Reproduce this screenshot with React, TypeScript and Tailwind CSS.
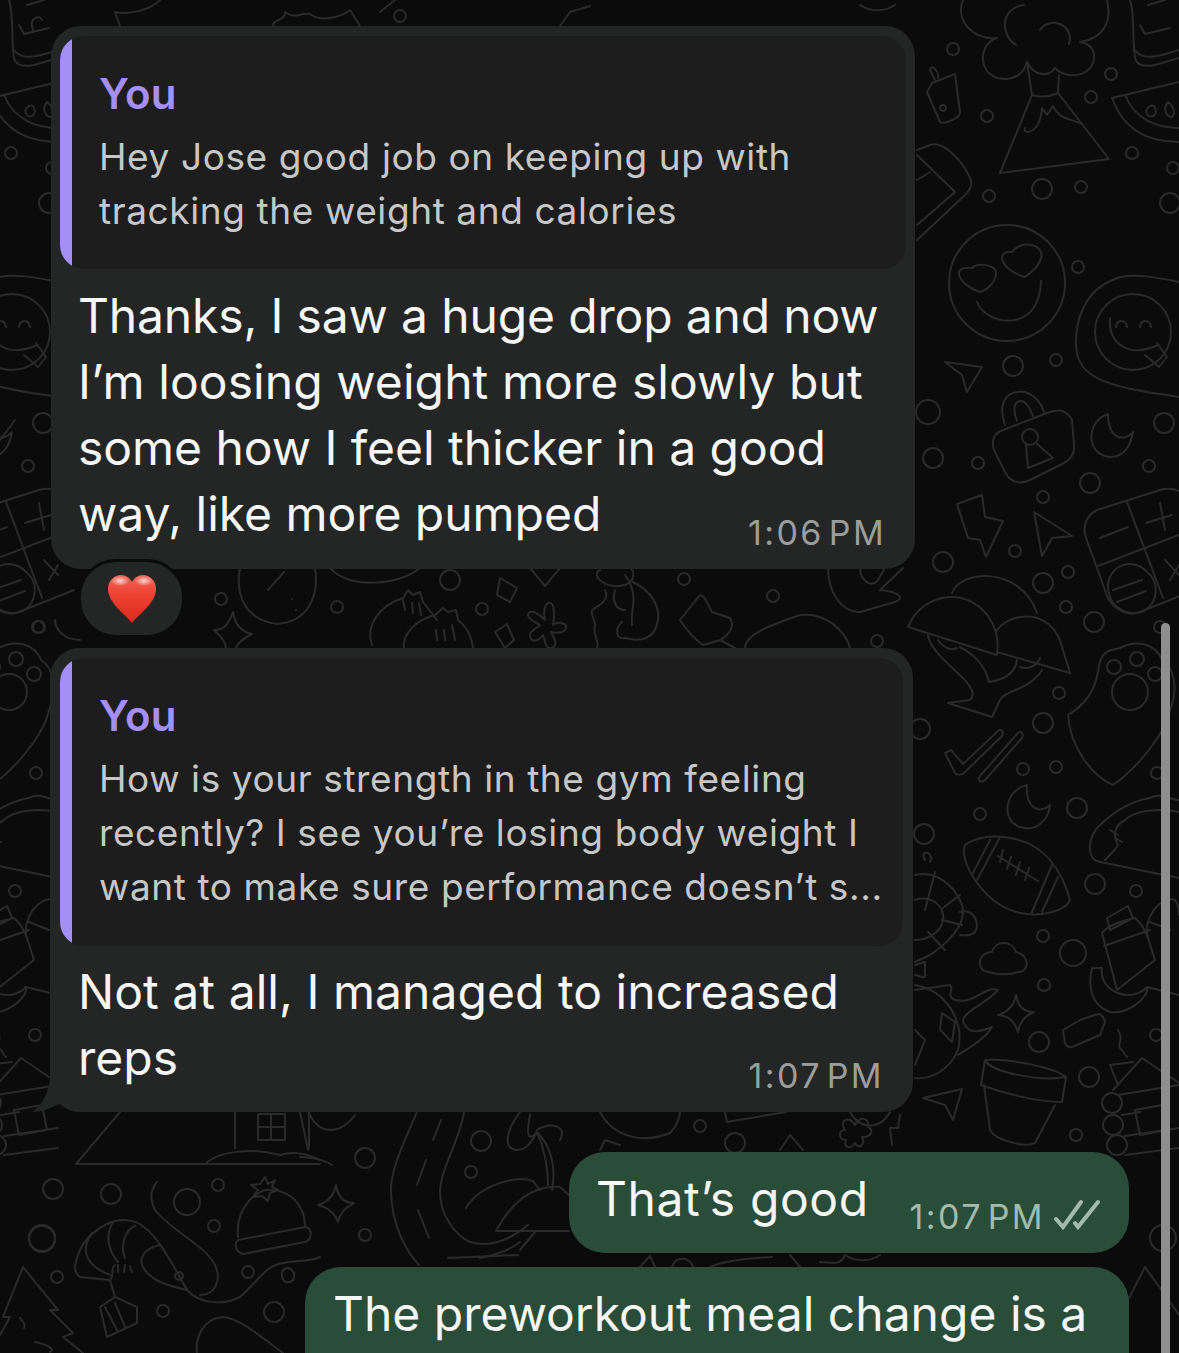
const circles: [number, number, number][] = [
  [953,49,6],[987,116,6],[1111,74,6],[1091,97,6],[1132,153,6],[1173,168,6],[989,196,6],[1042,189,10],[1081,187,6],[1170,203,10],[1078,267,6],[1013,366,10],[1056,360,6],
  [928,412,12],[933,458,10],[978,463,6],[1090,483,10],[1043,497,6],[1015,551,6],[943,562,10],[1043,583,10],[1068,572,6],[1066,607,6],[1094,622,10],[1059,693,6],[1043,723,10],[1023,769,6],[1056,767,6],[1164,423,10],[1149,466,6],[1157,773,6],[1160,627,6],[920,729,10],
  [980,814,6],[1077,808,10],[924,834,10],[1043,936,6],[1073,953,13],[1044,985,6],[1039,1042,10],[1089,1077,10],[1076,1135,6],[1095,884,10],[1136,891,6],[1156,1035,6],[1112,1103,10],[1113,1125,10],[1117,1145,10],
  [1163,1238,13],[1130,692,18],[1114,667,7],[1137,659,7],[1155,674,7],
];
const paths: string[] = [
  // volcano
  "M1000 173L1032 95Q1045 99 1058 93L1109 159Z",
  "M1032 95L1027 62M1058 93L1059 75",
  "M1027 62C1022 85 985 85 983 60C982 48 990 40 997 38C972 40 955 20 963 0M1027 62C1035 78 1050 76 1055 68C1065 80 1095 78 1094 55C1093 46 1086 43 1080 42C1105 38 1112 20 1107 0",
  "M1016 45C1000 35 1000 8 1024 5M1040 30C1050 15 1075 25 1069 44",
  "M1025 128C1022 135 1040 135 1042 108L1047 115L1053 106C1060 120 1070 118 1082 124",
  // small bottle
  "M932 83L955 74L960 112C960 118 945 125 940 122L927 92Z M935 80L930 70C932 62 940 74 938 78M943 105a3 3 0 1 0 .1 0",
  // watermelon
  "M1112 98L1179 82M1112 98C1125 135 1155 142 1179 142M1125 95C1135 120 1158 128 1179 128",
  "M1150 106c6 -3 8 8 3 10c-6 2 -10 -6 -3 -10M1168 102c5 3 8 12 4 15c-5 0 -10 -8 -4 -15",
  // cake
  "M1130 0C1135 15 1132 40 1135 58C1137 66 1145 67 1155 65L1179 58M1135 50C1142 60 1155 58 1179 50M1140 25L1145 34L1170 28M1148 5L1165 0",
  // phone box
  "M917 150L930 145C945 140 965 165 971 180C973 187 968 192 965 195L917 240M917 155L955 192L917 225M917 180L930 172",
  // heart smiley
  "M1065 283a58 58 0 1 1 -116 0a58 58 0 1 1 116 0",
  "M977 302C985 325 1040 335 1041 281",
  "M980 292C958 285 950 265 972 268C978 262 995 265 996 272C997 280 988 290 980 292Z",
  "M1025 277C1000 270 995 250 1012 252C1020 240 1045 243 1041 258C1040 265 1032 272 1025 277Z",
  // tongue smiley
  "M1171 332a38 38 0 1 1 -76 0a38 38 0 1 1 76 0",
  "M1110 318C1108 345 1130 358 1158 345M1116 327c1 -8 10 -8 11 0M1140 327c1 -8 10 -8 11 0M1145 355l14 12l8 -10l-10 -14",
  "M1179 282C1160 278 1130 272 1115 279C1085 290 1075 320 1076 345C1077 380 1110 387 1179 397",
  // plane
  "M945 362L982 367L967 392L962 375Z",
  // padlock
  "M1005 425C998 405 1005 393 1018 392C1030 390 1040 400 1044 412M1017 421C1012 408 1015 402 1020 401C1026 400 1030 408 1033 416",
  "M1003 430L1050 412C1060 408 1068 412 1072 420L1074 445C1075 455 1070 460 1060 465L1030 480C1020 485 1010 482 1005 472L994 450C991 440 994 433 1003 430Z",
  "M1038 437a8 8 0 1 0 -16 0a8 8 0 1 0 16 0M1026 445L1028 468L1053 458L1036 443",
  // moon
  "M1108 414C1088 420 1085 450 1105 456C1120 460 1130 450 1133 432C1125 442 1108 440 1108 414Z",
  // bolt
  "M957 504L982 495L985 517L1003 521L986 557L980 540L968 538Z",
  // arrow
  "M1034 512L1072 536L1052 538L1042 556Z",
  // calculator
  "M1085 535C1083 525 1087 515 1097 510L1160 490C1170 487 1179 490 1185 495M1085 535L1105 590C1108 605 1125 618 1140 612L1195 590",
  "M1127 502L1163 598M1098 566L1179 535M1100 538L1128 527M1146 523L1172 515M1160 503L1165 530M1165 560L1179 575M1179 565L1170 580",
  "M1108 585a22 22 0 0 1 38 -14a24 24 0 0 1 -2 40a26 26 0 0 1 -36 -26M1113 590L1142 580M1117 602L1146 591",
  // mushroom hats
  "M908 627L997 655C1002 620 975 595 950 597C930 598 915 610 908 627Z",
  "M996 632C1005 615 1045 605 1060 640L1070 673L997 652",
  "M952 593C960 570 1020 565 1037 613",
  "M928 635C930 650 950 665 965 680C973 690 975 695 970 700L948 703L992 717L1000 700C1005 690 1030 690 1042 670",
  "M938 640C945 650 953 650 957 648M960 647C975 655 985 665 989 682C1002 680 1015 675 1017 660M1020 667C1030 670 1037 665 1040 658",
  // paw shield
  "M1068 715C1085 705 1095 690 1098 672C1100 650 1110 650 1120 648C1135 640 1155 642 1162 660C1175 668 1178 690 1170 710C1165 735 1135 770 1113 785C1090 775 1070 745 1068 715Z",
  // double check
  "M945 753L951 750L963 764L998 731C1002 727 1004 733 1002 736L965 772C962 775 958 776 955 773ZM980 776L1018 733C1022 730 1024 735 1022 738L985 780C982 783 976 781 980 776Z",
  // moon 2
  "M1027 785C1005 790 1000 820 1020 827C1035 832 1048 822 1050 805C1040 815 1025 808 1027 785Z",
  // football
  "M965 845C985 830 1030 835 1050 860C1062 875 1068 892 1070 900C1065 912 1040 917 1020 913C995 908 975 885 967 865C963 855 963 850 965 845Z",
  "M1000 837L977 880M990 840L972 875M1052 865L1032 912M1058 877L1042 912M998 856L1038 881M1003 850L1000 862M1011 857L1007 869M1020 862L1016 875M1029 868L1025 880",
  // taco
  "M1100 862C1085 860 1088 835 1100 825C1115 810 1135 800 1150 798C1160 792 1170 800 1179 800M1100 862L1179 878M1105 860C1110 855 1115 850 1118 845C1112 835 1115 825 1125 820C1135 810 1160 808 1179 812M1110 830L1118 835M1115 838L1122 842",
  // cloud
  "M988 972C975 970 978 952 992 952C995 940 1012 940 1016 952C1030 955 1030 972 1018 972C1010 975 1000 975 988 972Z",
  // star
  "M1016 995C1018 1008 1025 1012 1034 1012C1026 1015 1020 1020 1018 1032C1014 1020 1008 1016 998 1015C1008 1012 1014 1005 1016 995Z",
  // block
  "M1063 1030L1073 1024L1080 1020L1098 1014C1102 1014 1104 1018 1105 1022L1100 1035L1072 1047C1068 1048 1066 1045 1065 1043Z",
  // pot
  "M985 1060C1010 1058 1055 1068 1066 1077L1062 1102C1035 1102 1000 1092 981 1085ZM985 1060C990 1072 1040 1082 1066 1077M984 1085L990 1130C995 1140 1025 1148 1035 1143L1055 1105",
  // plane 2
  "M923 1098L962 1089L953 1120L945 1105Z",
  // bottle & bag
  "M1107 918L1128 906L1133 918L1110 930ZM1102 933C1108 925 1125 920 1135 918C1140 922 1145 930 1148 938L1155 960L1117 990ZM1104 946L1150 930",
  "M1148 938C1142 920 1160 895 1175 900C1179 905 1179 910 1179 915M1150 922L1170 930",
  // banana
  "M1092 968L1102 968C1098 990 1130 1005 1147 987C1150 995 1130 1015 1110 1012C1090 1005 1088 985 1092 968ZM1147 987L1179 995",
  // log house
  "M1113 1090L1142 1058L1179 1083M1118 1095L1179 1085M1135 1110L1163 1105L1168 1130L1140 1135ZM1118 1085L1110 1065L1133 1062M1122 1115L1140 1112M1125 1136L1179 1128M1125 1155L1179 1148",
  "M1118 1030C1125 1040 1115 1045 1122 1050C1125 1055 1125 1055 1127 1057",
  // turtle & ball
  "M915 875C935 870 955 885 962 905C968 925 945 945 930 955L915 962M915 900C930 895 945 905 943 920C940 935 925 940 915 940M935 872L925 910M960 895L943 908M928 932L945 950M942 920L962 925",
  "M960 912C975 908 980 925 975 932C970 937 965 935 960 935",
  "M925 860C918 850 935 850 930 862M915 965L925 962L925 975C925 980 918 975 915 975",
  "M915 990L950 985C955 990 945 995 955 1000C975 1005 985 985 998 990C985 1005 955 1015 965 1025C970 1035 985 1030 992 1027C985 1040 965 1050 958 1055",
  "M915 985C945 990 965 1020 958 1050C950 1070 930 1080 915 1078M942 1013L955 1022L952 1042L940 1030ZM915 1030L925 1040L915 1065",
];
const gapCircles: [number, number, number][] = [
  [53,1189,10],[111,1194,10],[187,1202,13],[218,1185,6],[214,1226,6],[42,1239,13],[57,1277,6],[163,1311,6],[248,1272,6],[274,1312,10],
  [365,1158,10],[365,1235,6],[471,1172,6],[481,1141,10],[700,1126,6],[735,1143,10],[221,599,6],[337,607,6],[450,580,10],[482,609,6],[684,579,6],[773,596,6],[877,641,6],[400,16,6],[38,627,6],
];
const gapPaths: string[] = [
  // triangular house
  "M76 1164L120 1112M76 1164L320 1164M235 1112L235 1148M309 1112L309 1148M258 1114H285V1140H258ZM271 1114V1140M258 1127H285M205 1164C220 1150 255 1148 280 1155C295 1150 310 1155 320 1160",
  // shrimp
  "M75 1267C78 1245 90 1233 105 1225C118 1218 135 1218 145 1228C155 1235 165 1250 187 1290C165 1285 150 1280 143 1267C138 1258 145 1248 160 1245",
  "M75 1267C75 1272 78 1276 80 1277L110 1280L115 1297L100 1307L107 1337L137 1323L137 1307L115 1297M110 1280C115 1275 110 1268 115 1265M92 1233C80 1250 85 1265 110 1275M113 1222C105 1235 108 1250 118 1262M135 1226C125 1230 120 1245 125 1258M118 1265L118 1272M125 1265L124 1272M130 1266L132 1272M105 1307L118 1332M115 1303L125 1327",
  "M179 1272a4 4 0 1 0 .1 0",
  // ribbon
  "M157 1182C150 1190 150 1200 155 1210C170 1230 205 1245 215 1265C222 1280 215 1295 200 1295M187 1290C200 1305 225 1305 240 1297C255 1285 265 1265 283 1263C295 1260 310 1262 320 1257",
  "M283 1270c6 -6 14 2 10 10c-6 6 -14 0 -10 -10",
  // hat
  "M238 1237C235 1205 260 1188 270 1190C290 1190 305 1205 305 1227M238 1240L305 1227C313 1228 312 1240 305 1242L243 1254C235 1252 234 1243 238 1240Z",
  "M265 1177L268 1184L275 1180L272 1187L278 1190L270 1193L268 1201L262 1196L253 1197L258 1190L251 1185L260 1184Z",
  // tree
  "M23 1267L58 1310L50 1310L73 1333L63 1337L83 1353M23 1267L3 1317L10 1317L0 1335M20 1318C22 1322 26 1322 24 1328M35 1342C50 1345 55 1350 50 1352",
  "M197 1353C195 1335 205 1318 223 1317C240 1318 265 1340 283 1353",
  // ribbon river
  "M417 1112C405 1140 390 1170 391 1192C392 1225 405 1250 419 1265M464 1112C460 1140 440 1170 440 1192C440 1215 455 1235 470 1242C490 1248 510 1240 528 1225",
  "M441 1120L433 1140M426 1160L417 1185M418 1210L429 1238M448 1258L518 1255",
  // star
  "M336 1185C338 1198 345 1203 354 1203C346 1207 340 1212 338 1222C334 1212 328 1208 318 1205C328 1202 334 1195 336 1185Z",
  "M300 1112L308 1150M300 1157C310 1157 325 1160 332 1165M310 1115C320 1135 340 1135 355 1115",
  // palm
  "M537 1132C555 1150 555 1175 552 1190M537 1132C545 1150 548 1165 548 1185M537 1132C530 1145 525 1150 517 1150C505 1150 503 1135 520 1112M537 1130C550 1122 568 1125 560 1140M537 1132C530 1140 525 1140 530 1115",
  "M466 1208C480 1185 515 1175 533 1181L540 1190M496 1231C510 1205 530 1185 560 1187L569 1195M496 1231H569M535 1232L520 1250M480 1258C495 1255 510 1250 520 1242",
  // misc middle bottom
  "M600 1112C612 1135 640 1145 670 1133C678 1125 680 1115 680 1112M725 1112L727 1122L786 1112M850 1112C860 1130 880 1130 890 1112M845 1130C838 1120 850 1115 855 1125C860 1115 870 1118 868 1127C875 1130 870 1138 862 1137C866 1145 858 1150 855 1143C850 1150 843 1148 846 1140C838 1140 838 1130 845 1130ZM892 1145L890 1128L898 1128L900 1115",
  "M780 1150L790 1135L803 1150M600 1150L605 1140L620 1145",
  "M640 1267L650 1256L655 1267M672 1267C675 1256 690 1256 693 1267M710 1267C720 1262 745 1258 772 1257M800 1267L790 1255M820 1262C830 1262 840 1267 845 1255C855 1262 870 1262 880 1255",
  "M1145 1267L1165 1295L1179 1315M1145 1267L1128 1300M1165 1300L1170 1308",
  // timer
  "M240 568C235 595 245 620 277 624C305 622 320 600 315 568M268 590L284 572M292 599l0 0M296 610l0 0",
  // star left
  "M233 612C235 625 242 632 252 634C244 638 238 642 236 648M214 630C222 630 228 627 233 612M214 630C220 636 225 640 226 648",
  "M80 640C65 640 55 630 55 620",
  "M134 636C130 625 140 612 150 615",
  // dumplings
  "M372 645C365 625 380 605 403 598L408 590L413 595L420 592L423 602L437 620M403 600L405 610M412 603L413 613M419 603L421 615",
  "M404 648C402 635 415 620 435 615L443 608L448 612L456 610L458 620C470 630 472 640 473 648M436 630L437 640M444 630L445 640M452 625L455 640",
  // flower
  "M548 603C556 600 554 620 553 625C560 620 570 625 565 630C560 635 552 632 551 632C555 640 558 645 552 648C545 650 545 640 543 635C535 645 530 640 530 635C530 630 538 628 540 625C530 620 525 615 530 612C535 610 543 618 545 620C543 610 545 605 548 603Z",
  // girl
  "M600 570C590 575 605 590 625 585C635 582 635 570 630 568M605 590C610 600 600 605 592 610C590 615 595 618 595 625C592 635 600 640 597 648M615 590C612 600 615 610 625 610M633 582C650 590 660 605 658 620C655 640 640 642 625 638C615 640 615 628 622 622M625 575C640 595 630 610 632 625",
  // pin
  "M680 620L700 595C705 595 708 605 712 612L730 618C735 625 730 635 720 640L703 645C695 640 685 628 680 620ZM720 640L735 648",
  // blobs
  "M745 648C745 635 770 625 800 615C825 612 845 630 850 648",
  "M828 568C828 590 840 612 860 612L895 602C905 598 900 592 880 590M860 568C860 578 870 590 878 580L885 568M880 590L903 568",
  "M500 578L517 588L510 602L497 595ZM495 632L507 624L514 640L505 648ZM530 568L545 586L560 568M330 568C350 590 400 585 420 568",
  "M33 30C28 18 40 14 42 20",
  // top strip
  "M273 26C273 18 285 22 285 12C295 20 300 12 310 14C320 22 340 18 350 10L360 26M380 12L395 0M560 26L570 12L590 6M160 0C150 10 130 15 115 12L120 26",
  "M0 440L15 420M860 5C870 12 885 12 895 5",
];

function Reply({ text, tall }: { text: React.ReactNode; tall?: boolean }) {
  return (
    <div className="flex overflow-hidden rounded-[24px] bg-[#1d1d1d]">
      <div className="w-[12px] shrink-0 bg-[#a48ff6]" />
      <div className={tall
        ? "pl-[27px] pr-[10px] pt-[33px] pb-[32px] text-[37px] leading-[54px] tracking-[0.6px] text-[#c6c7c7] whitespace-nowrap"
        : "pl-[27px] pr-[10px] pt-[33px] pb-[31px] text-[37px] leading-[54px] tracking-[0.6px] text-[#c6c7c7] whitespace-nowrap"}>
        <div className="mb-[11px] text-[42px] leading-[50px] tracking-[0.2px] font-semibold text-[#a48ff6]">You</div>
        {text}
      </div>
    </div>
  );
}

const timeCls = "text-[34px] leading-[40px] tracking-[2.4px] [word-spacing:-7px] whitespace-nowrap";

export default function App() {
  return (
    <div className="relative h-[1353px] w-[1179px] overflow-hidden bg-[#0b0b0b] font-['Inter','Liberation_Sans',sans-serif]">
      <svg className="absolute inset-0" width="1179" height="1353" viewBox="0 0 1179 1353" fill="none" stroke="#2a2a2a" strokeWidth="2" strokeLinecap="round" strokeLinejoin="round">
        <g id="tile">
          {paths.map((d, i) => <path key={i} d={d} />)}
          {circles.map(([x, y, r], i) => <circle key={i} cx={x} cy={y} r={r} />)}
        </g>
        <use href="#tile" transform="translate(-1121 0)" />
        {gapPaths.map((d, i) => <path key={i} d={d} />)}
        {gapCircles.map(([x, y, r], i) => <circle key={i} cx={x} cy={y} r={r} />)}
      </svg>

      <div className="relative flex flex-col pt-[26px]">
        <div className="relative ml-[51px] w-[864px] rounded-[30px] bg-[#242625] px-[9px] pt-[10px]">
          <Reply text={<>Hey Jose good job on keeping up with<br />tracking the weight and calories</>} />
          <div className="pl-[20px] -ml-[2px] pt-[14px] pb-[22px] text-[48px] leading-[66px] tracking-[-0.03px] text-[#f6f6f6] whitespace-nowrap">
            <span className="tracking-[-0.15px]">Thanks, I saw a huge drop and now</span><br /><span className="tracking-[0.08px]">I’m loosing weight more slowly but</span><br />some how I feel thicker in a good<br />way, like more pumped
          </div>
          <div className={`absolute bottom-[16px] right-[29px] text-[#9c9e9e] ${timeCls}`}>1:06 PM</div>
        </div>

        <div className="relative z-10 -mt-[10px] ml-[78px] flex h-[79px] w-[107px] items-center justify-center rounded-[38px] border-[3px] border-[#0b0b0b] bg-[#242625]">
          <svg width="50" height="50" viewBox="0 0 50 50">
            <defs>
              <linearGradient id="heart" x1="0" y1="0" x2="0" y2="1">
                <stop offset="0" stopColor="#f2685b" />
                <stop offset="0.4" stopColor="#ee4334" />
                <stop offset="1" stopColor="#d92a1d" />
              </linearGradient>
              <radialGradient id="shine" cx="0.5" cy="0.5" r="0.5">
                <stop offset="0" stopColor="#ffffff" stopOpacity="0.75" />
                <stop offset="1" stopColor="#ffffff" stopOpacity="0" />
              </radialGradient>
            </defs>
            <path d="M25 49C18 40 1 29 1 15C1 6 8 1 14 1C19 1 23 4 25 8C27 4 31 1 36 1C42 1 49 6 49 15C49 29 32 40 25 49Z" fill="url(#heart)" />
            <ellipse cx="13" cy="7" rx="9" ry="5" fill="url(#shine)" />
            <ellipse cx="37" cy="7" rx="9" ry="5" fill="url(#shine)" />
          </svg>
        </div>

        <div className="relative ml-[50px] mt-[10px] w-[863px] rounded-[30px] bg-[#242625] px-[10px] pt-[10px]">
          <Reply tall text={<>How is your strength in the gym feeling<br />recently? I see you’re losing body weight I<br />want to make sure performance doesn’t s...</>} />
          <div className="pl-[19px] -ml-[1px] pt-[13px] pb-[21px] text-[48px] leading-[66px] tracking-[0.05px] text-[#f6f6f6] whitespace-nowrap">
            Not at all, I managed to increased<br />reps
          </div>
          <div className={`absolute bottom-[16px] right-[29px] text-[#9c9e9e] ${timeCls}`}>1:07 PM</div>
          <svg className="absolute -left-[18px] bottom-0" width="50" height="36" viewBox="0 0 50 36">
            <path d="M18 0C18 15 10 30 0 36C10 36 21 32 30 26C35 32 42 36 50 36V0Z" fill="#242625" />
          </svg>
        </div>

        <div className="ml-[569px] mt-[40px] flex h-[101px] w-[560px] items-start rounded-[36px] bg-[#2a4d3a] pl-[27px] pt-[14px]">
          <span className="text-[48px] leading-[66px] tracking-[0.6px] text-[#f6f6f6] whitespace-nowrap">That’s good</span>
          <span className={`ml-auto mt-[31px] text-[#a3bbad] ${timeCls}`}>1:07 PM</span>
          <svg className="ml-[9px] mr-[29px] mt-[33px]" width="46" height="34" viewBox="0 0 46 34" fill="none" stroke="#a3bbad" strokeWidth="4" strokeLinecap="round">
            <path d="M2 20L9 28L27 3M21 24L24 28L44 3" />
          </svg>
        </div>

        <div className="ml-[305px] mt-[14px] h-[120px] w-[824px] rounded-t-[36px] bg-[#2a4d3a] pl-[28px] pt-[14px] text-[48px] leading-[66px] text-[#f6f6f6] whitespace-nowrap">
          The preworkout meal change is a
        </div>
      </div>

      <div className="absolute right-[9px] top-[623px] h-[760px] w-[9px] rounded-full bg-[#8f8f8f]" />
    </div>
  );
}
